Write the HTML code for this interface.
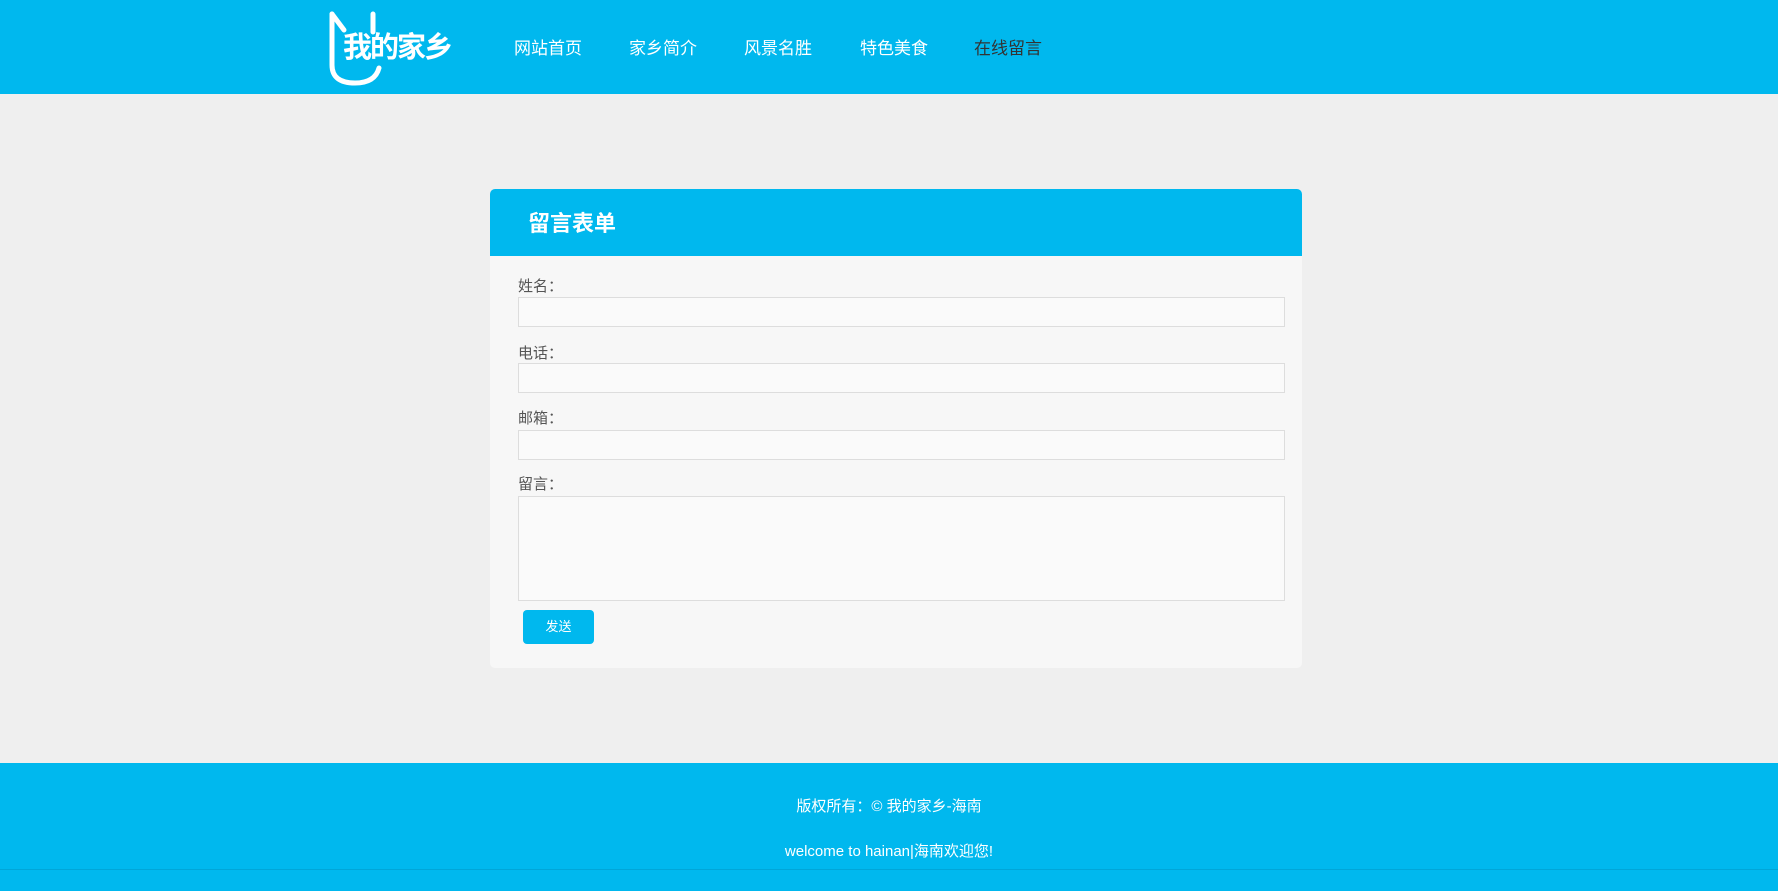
<!DOCTYPE html>
<html><head><meta charset="utf-8"><style>
*{margin:0;padding:0;box-sizing:border-box}
body{width:1778px;height:891px;background:#efefef;font-family:"Liberation Sans","Noto Sans CJK SC",sans-serif;position:relative;overflow:hidden}
.hd{position:absolute;left:0;top:0;width:1778px;height:94px;background:#00b8ee}
.nav a{position:absolute;top:38px;font-size:17px;color:#fff;text-decoration:none;line-height:22px}
.card{position:absolute;left:490px;top:189px;width:812px;height:479px;background:#f7f7f7;border-radius:5px;overflow:hidden}
.ch{height:67px;background:#00b8ee;color:#fff;font-weight:bold;font-size:22px;padding-left:38px;line-height:70px}
.lb{position:absolute;left:28px;font-size:15px;color:#555}
.in{position:absolute;left:28px;width:767px;background:#fafafa;border:1px solid #ddd}
.btn{position:absolute;left:33px;top:421px;width:71px;height:34px;background:#00b8ee;border-radius:4px;color:#fff;font-size:13px;text-align:center;line-height:34px}
.ft{position:absolute;left:0;top:763px;width:1778px;height:128px;background:#00b8ee;color:#fff;font-size:15px;text-align:center}
</style></head><body>
<div class="hd">
<svg style="position:absolute;left:327px;top:10px" width="66" height="76" viewBox="0 0 66 76"><path d="M5 4 L5 55 Q5 73 28 73 Q48 73 52 58" fill="none" stroke="#fff" stroke-width="5" stroke-linecap="round"/><path d="M5 4 L17 20 M46 4 L46 22" fill="none" stroke="#fff" stroke-width="5" stroke-linecap="round"/></svg>
<div style="position:absolute;left:343px;top:30px;color:#fff;font-size:29px;font-weight:bold;letter-spacing:-2px;line-height:36px">我的家乡</div>
<div class="nav"><a style="left:514px">网站首页</a><a style="left:629px">家乡简介</a><a style="left:744px">风景名胜</a><a style="left:860px">特色美食</a><a style="left:974px;color:#333">在线留言</a></div>
</div>
<div class="card"><div class="ch">留言表单</div>
<div class="lb" style="top:86px">姓名：</div><div class="in" style="top:108px;height:30px"></div>
<div class="lb" style="top:153px">电话：</div><div class="in" style="top:174px;height:30px"></div>
<div class="lb" style="top:218px">邮箱：</div><div class="in" style="top:241px;height:30px"></div>
<div class="lb" style="top:284px">留言：</div><div class="in" style="top:307px;height:105px"></div>
<div class="btn">发送</div>
</div>
<div class="ft"><div style="position:absolute;top:32px;width:100%">版权所有：© 我的家乡-海南</div><div style="position:absolute;top:77px;width:100%">welcome to hainan|海南欢迎您!</div><div style="position:absolute;top:106px;width:100%;height:1px;background:#00a6d8"></div></div>
</body></html>
